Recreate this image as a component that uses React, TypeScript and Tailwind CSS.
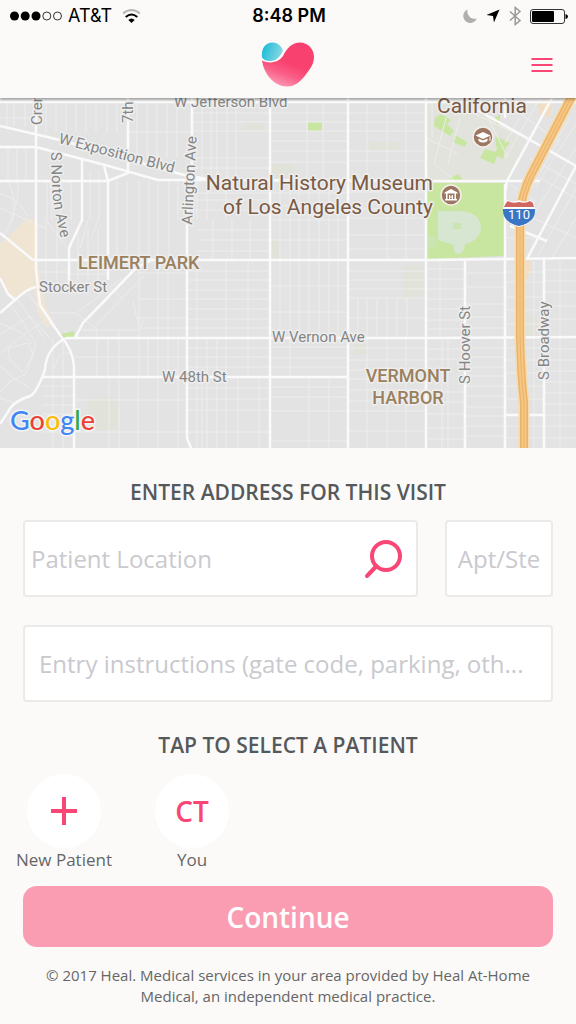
import React from 'react';

interface Block {
    x: [number, number];
    y: [number, number];
    xs: number[];
    ys: number[];
}

// Minor streets, one entry per block of the grid
const blocks: Block[] = [
    { x: [0, 36], y: [4, 28], xs: [7, 14, 25], ys: [20] },
    { x: [36, 128], y: [4, 34], xs: [46, 56, 66, 76, 86, 96, 107, 117], ys: [] },
    { x: [128, 192], y: [4, 60], xs: [137, 147, 157, 167, 177], ys: [34] },
    { x: [0, 36], y: [49, 83], xs: [8, 17, 26], ys: [] },
    { x: [36, 82], y: [83, 122], xs: [47, 61, 71], ys: [] },
    { x: [82, 108], y: [74, 122], xs: [90, 99], ys: [] },
    { x: [108, 187], y: [83, 122], xs: [117, 127, 139, 149, 158, 169, 178], ys: [] },
    { x: [108, 187], y: [122, 162], xs: [117, 127, 139, 149, 158, 169], ys: [] },
    { x: [36, 69], y: [122, 188], xs: [46, 57], ys: [174] },
    { x: [69, 108], y: [130, 162], xs: [78, 88, 98], ys: [] },
    { x: [69, 108], y: [162, 182], xs: [78, 88, 98], ys: [176] },
    { x: [138, 187], y: [162, 240], xs: [139, 158, 168], ys: [175, 201, 220, 230] },
    { x: [82, 138], y: [232, 240], xs: [97, 119], ys: [232] },
    { x: [75, 187], y: [240, 279], xs: [97, 108, 119, 139, 148, 158, 168, 178], ys: [259] },
    { x: [75, 187], y: [279, 350], xs: [109, 119, 138, 158, 178], ys: [302, 334] },
    { x: [42, 74], y: [240, 350], xs: [53, 63], ys: [288, 298, 307, 316, 334] },
    { x: [192, 270], y: [4, 82], xs: [202, 211, 217, 227, 236], ys: [15, 24, 33, 60, 70] },
    { x: [187, 270], y: [82, 122], xs: [197, 207, 226], ys: [95, 102, 112] },
    { x: [197, 270], y: [122, 162], xs: [213, 232, 250], ys: [132, 142, 153] },
    { x: [187, 270], y: [162, 240], xs: [197, 226, 248], ys: [173, 182, 192, 201, 211, 221, 230] },
    { x: [187, 270], y: [240, 279], xs: [197, 207, 217, 226, 248], ys: [250, 259, 269] },
    { x: [187, 270], y: [279, 350], xs: [197, 202, 207, 217, 226, 238, 259], ys: [290, 301, 312, 334] },
    { x: [270, 348], y: [4, 82], xs: [307, 323], ys: [15, 24, 33, 43, 53, 64] },
    { x: [270, 348], y: [82, 162], xs: [280, 290, 299, 309, 319, 329, 338], ys: [95, 108, 122, 142] },
    { x: [270, 348], y: [162, 240], xs: [280, 290, 299, 309, 319, 329, 338], ys: [188, 214] },
    { x: [270, 348], y: [240, 279], xs: [290], ys: [249, 260, 269] },
    { x: [270, 348], y: [279, 350], xs: [309, 329], ys: [289, 299, 313, 343] },
    { x: [348, 426], y: [4, 82], xs: [367, 387, 406], ys: [15, 24, 33, 53, 63] },
    { x: [348, 426], y: [82, 162], xs: [387, 406], ys: [94, 111, 120, 137, 151] },
    { x: [348, 426], y: [162, 200], xs: [], ys: [173, 182, 191, 200] },
    { x: [348, 426], y: [200, 240], xs: [358, 367, 377, 387, 397, 407], ys: [220] },
    { x: [348, 426], y: [240, 350], xs: [367, 387, 406], ys: [250, 262, 272, 281, 292, 303, 313, 333] },
    { x: [426, 465], y: [162, 240], xs: [440], ys: [171, 181, 191, 201, 211, 222, 231] },
    { x: [426, 465], y: [240, 350], xs: [442, 448], ys: [251, 261, 294, 304, 316, 330, 341] },
    { x: [465, 505], y: [162, 240], xs: [], ys: [175, 189, 206, 219, 230] },
    { x: [465, 505], y: [240, 350], xs: [], ys: [250, 259, 269, 278, 288, 298, 309, 318, 328, 338] },
    { x: [505, 544], y: [163, 350], xs: [534], ys: [174, 184, 199, 212, 226, 250, 262, 275, 288, 301, 328, 340] },
    { x: [544, 576], y: [163, 350], xs: [560], ys: [172, 183, 194, 208, 221, 251, 262, 273, 284, 295, 306, 317, 328, 340] },
];

const minorPath = blocks
    .map(({ x, y, xs, ys }) =>
        [
            ...xs.map((v) => `M${v} ${y[0]}V${y[1]}`),
            ...ys.map((v) => `M${x[0]} ${v}H${x[1]}`),
        ].join('')
    )
    .join('');

const curvedMinor = [
    'M0 110L45 130M0 96Q20 100 27 118M8 83Q18 100 12 125M17 83Q22 100 4 138',
    'M98 122L91 140M88 122L80 150M46 122L66 148M50 83L52 122',
    'M12 208L36 245L26 276M0 225L22 235L32 246M8 250L28 245L34 258L22 274L10 262Z',
    'M0 255L20 240L50 218M18 202L44 240M28 195L55 232M0 236L14 228L30 218L50 240',
    'M0 268L14 280L0 294M14 280L30 290M0 300L18 306M8 284L26 276',
    'M50 215H76L98 232M78 214L122 180M85 222L110 200M92 232L122 200L144 178',
    'M110 190L122 200L119 203M133 203L139 230M145 220L139 232M54 270Q60 250 72 256',
    'M426 40L458 56M446 20L434 66L454 82M460 20L448 66M470 14L526 40',
    'M576 26L536 88M570 20L538 70M576 50L530 122M576 90L536 162M576 120L550 163',
    'M530 60L576 86M540 80L576 100M512 110L576 140M520 20L505 45M505 5L560 44',
    'M432 4V40M510 86L536 104M540 0L505 60M560 40L520 110M508 60L480 4M505 140H540',
].join('');

const majorPath = [
    'M0 4H576',
    'M0 28L60 42L180 76L212 82',
    'M0 49H36L105 67L158 82H210L430 83H540',
    'M0 83H108',
    'M33 162H430L576 160',
    'M66 240H430L576 239',
    'M42 279H348M505 317H544',
    'M36 0V172L40 207L60 237Q73 252 74 268V350',
    'M82 62V122L69 150V188',
    'M108 83V182M128 0V75L108 83L104 68',
    'M192 0V62L187 122V340L191 350',
    'M270 0V350M348 0V350M426 0V350M505 86V350M465 162V350M544 160V350',
    'M150 163Q138 168 134 172L83 225L75 240',
    'M0 135L33 162M0 180L8 196L15 202M36 189Q28 190 15 202L0 215',
    'M66 240Q46 250 45 272Q36 296 30 298Q12 304 8 314L0 326',
    'M552 0L507 83L505 96M474 10L576 68L527 161M510 128L547 143M505 0V20',
].join('');

const freewayPath = 'M573 -4L531 77Q522 95 520 115V239Q521 278 524 305V352';

const MapLabel: React.FC<React.SVGProps<SVGTextElement>> = ({ children, ...rest }) => (
    <text
        fontSize="15"
        fill="#858585"
        stroke="#eeeeee"
        strokeWidth="3"
        strokeLinejoin="round"
        paintOrder="stroke"
        {...rest}
    >
        {children}
    </text>
);

const VisitMap: React.FC = () => (
    <svg
        viewBox="0 0 576 350"
        className="block w-full bg-[#e3e3e3] font-['Roboto',sans-serif]"
        role="img"
        aria-label="Map of Los Angeles"
    >
        {/* Land use */}
        <path d="M27 121H38V168L45 205L53 226L46 229L37 213L34 190L15 202L6 192L0 178V146Z" fill="#f0e4d2" />
        <path d="M426 4H470L526 45L506 83H426Z" fill="#e2e3dc" />
        <path d="M403 168H424V200H403ZM88 300H118V332H88ZM526 218H537V237H526ZM244 24H264V32H244ZM272 66H294V80H272ZM370 44H400V52H370ZM354 246H368V256H354ZM272 142H280V160H272Z" fill="#e1e2da" />
        <path d="M427 85H504V158L427 161Z" fill="#c9e6a1" />
        <path d="M438 113H463Q481 116 481 130Q480 142 465 146Q464 156 458 156Q453 156 454 147L438 142Z" fill="#d7e6d0" />
        <path d="M453 125H461V131H453ZM428 138H436V151H428Z" fill="#cbe5b2" />
        <path d="M308 24H322V33H308ZM61 236L74 233V240H63ZM435 20L441 16L451 22L447 26L454 33L450 38L434 28ZM455 37L467 44L465 49L453 44ZM495 38L510 45L506 49H496ZM485 51L495 54L500 45L506 47L503 61L497 58L494 66L480 60ZM450 80L458 76L464 83H450ZM495 20L500 16V24L497 28Z" fill="#c9e6a1" />
        <path d="M538 6L552 0L550 20L540 16ZM530 160L531 172L524 186V163Z" fill="#f2dfc3" />

        {/* Streets */}
        <path d={minorPath + curvedMinor} fill="none" stroke="#ededed" />
        <path d={majorPath} fill="none" stroke="#fafafa" strokeWidth="2.500" />
        <path d={freewayPath} fill="none" stroke="#f6dcae" strokeWidth="11" />
        <path d={freewayPath} fill="none" stroke="#eab368" strokeWidth="8" />
        <path d={freewayPath} fill="none" stroke="#f6c684" strokeWidth="5" />
        <path d={freewayPath} fill="none" stroke="#eab368" />

        {/* Interstate shield */}
        <path d="M505 104L508 102Q512 105 519 102Q526 105 530 102L534 104L535 111Q535 125 519 129Q503 125 503 111Z" fill="#fff" />
        <path d="M506 105L508 103Q512 106 519 104Q526 106 530 103L533 105L534 109H504Z" fill="#cf6660" />
        <path d="M503 111H535Q536 124 519 128Q502 124 503 111Z" fill="#3a76c6" />
        <text x="519" y="121" fontSize="13" fill="#fff" textAnchor="middle">110</text>

        {/* Places */}
        <g>
            <circle cx="483" cy="39" r="10" fill="#9c7862" stroke="#f5efeb" strokeWidth="1.500" />
            <path d="M475.500 37.500L483 34L490.500 37.500L483 41ZM478.500 40.500L483 42.500L487.500 40.500V43Q483 46 478.500 43ZM489.500 38.500H490.500V43H489.500Z" fill="#fff" />
            <circle cx="451" cy="97" r="10" fill="#9c7862" stroke="#f5efeb" strokeWidth="1.500" />
            <path d="M444.500 94.500L451 91L457.500 94.500V95.500H444.500ZM446 95H447.500V101H446ZM454.500 95H456V101H454.500ZM445 101H457V102.500H445ZM449 97H450.200V98.500H451.800V97H453V101H451.800V99.500H450.200V101H449Z" fill="#fff" />
        </g>

        <MapLabel x="174" y="9">W Jefferson Blvd</MapLabel>
        <MapLabel transform="translate(42 27) rotate(-90)">Cren</MapLabel>
        <MapLabel transform="translate(133 25) rotate(-90)">7th</MapLabel>
        <MapLabel transform="translate(58 45) rotate(14.500)">W Exposition Blvd</MapLabel>
        <path id="norton" d="M51 54L52 90Q53 112 66 160" fill="none" />
        <MapLabel>
            <textPath href="#norton">S Norton Ave</textPath>
        </MapLabel>
        <MapLabel transform="translate(192 127) rotate(-87)">Arlington Ave</MapLabel>
        <MapLabel x="39" y="194">Stocker St</MapLabel>
        <MapLabel x="272" y="244">W Vernon Ave</MapLabel>
        <MapLabel x="162" y="284">W 48th St</MapLabel>
        <MapLabel transform="translate(470 286) rotate(-90)">S Hoover St</MapLabel>
        <MapLabel transform="translate(549 282) rotate(-90)">S Broadway</MapLabel>

        <MapLabel x="437" y="15" fontSize="21" fill="#7a5a44">California</MapLabel>
        <MapLabel x="433" y="92" fontSize="21" fill="#7a5a44" textAnchor="end">Natural History Museum</MapLabel>
        <MapLabel x="433" y="116" fontSize="21" fill="#7a5a44" textAnchor="end">of Los Angeles County</MapLabel>

        <MapLabel x="78" y="171" fontSize="18" fontWeight="500" fill="#9a805c">LEIMERT PARK</MapLabel>
        <MapLabel x="408" y="284" fontSize="18" fontWeight="500" fill="#9a805c" textAnchor="middle">VERMONT</MapLabel>
        <MapLabel x="408" y="306" fontSize="18" fontWeight="500" fill="#9a805c" textAnchor="middle">HARBOR</MapLabel>

        <text
            x="10"
            y="332"
            fontSize="27"
            fontWeight="500"
            className="font-['Lato',sans-serif]"
            stroke="#f4f4f4"
            strokeWidth="3"
            paintOrder="stroke"
        >
            <tspan fill="#4285f4">G</tspan>
            <tspan fill="#ea4335">o</tspan>
            <tspan fill="#fbbc05">o</tspan>
            <tspan fill="#4285f4">g</tspan>
            <tspan fill="#34a853">l</tspan>
            <tspan fill="#ea4335">e</tspan>
        </text>
    </svg>
);

const HealLogo: React.FC = () => (
    <svg width="54" height="46" viewBox="0 0 54 46" aria-label="Heal" role="img">
        <defs>
            <linearGradient id="heal-pink" x1="0.600" y1="0.500" x2="0.350" y2="1.050">
                <stop offset="0" stopColor="#f9416f" />
                <stop offset="0.450" stopColor="#f95f88" />
                <stop offset="1" stopColor="#fda3bd" />
            </linearGradient>
            <linearGradient id="heal-blue" x1="0" y1="0.300" x2="1" y2="0.600">
                <stop offset="0" stopColor="#19bcd6" />
                <stop offset="1" stopColor="#90d8e4" />
            </linearGradient>
        </defs>
        <path d="M1 18.500C8 22 17 21 22 14C26 6 31 0.500 39 0.500C47 0.500 53 7 53 15C53 21 50 26 46 31C40 39 35 44.500 26 44.500C13 44.500 3 32 1 18.500Z" fill="url(#heal-pink)" />
        <path d="M1 15.500C0 7 4 0.500 11.500 0.500C16.500 0.500 20 3.500 22 8.500C19 15 15 19 9.500 19C5.500 19 2.500 18 1 15.500Z" fill="url(#heal-blue)" />
    </svg>
);

const StatusBar: React.FC = () => (
    <div className="flex h-8 items-center justify-between pr-2 pl-2.5 font-['Inter',sans-serif] text-lg text-black">
        <div className="flex flex-1 items-center gap-1.5">
            <svg width="52" height="10" viewBox="0 0 52 10">
                <circle cx="4.500" cy="5" r="4.500" />
                <circle cx="15.200" cy="5" r="4.500" />
                <circle cx="26" cy="5" r="4.500" />
                <circle cx="36.800" cy="5" r="4" fill="none" stroke="#000" strokeWidth="0.800" />
                <circle cx="47.500" cy="5" r="4" fill="none" stroke="#000" strokeWidth="0.800" />
            </svg>
            <span>AT&amp;T</span>
            <svg width="19" height="14" viewBox="0 0 19 14" className="ml-1" fill="none">
                <path d="M1 4.500Q9.500 -2.500 18 4.500" stroke="#b5b5b5" strokeWidth="1.800" />
                <path d="M3.700 8Q9.500 3 15.300 8" stroke="#000" strokeWidth="2" />
                <path d="M6.300 11Q9.500 8 12.700 11L9.500 14Z" fill="#000" />
            </svg>
        </div>
        <span className="font-semibold">8:48 PM</span>
        <div className="flex flex-1 items-center justify-end gap-[9px]">
            <svg width="14" height="14" viewBox="0 0 14 14">
                <path d="M4.500 0.500A7 7 0 1 0 13.800 9.500A7.500 7.500 0 0 1 4.500 0.500Z" fill="#b0afae" />
            </svg>
            <svg width="14" height="14" viewBox="0 0 15 15">
                <path d="M14.500 0.500L8.500 14.500L7.500 7.500L0.500 6.500Z" />
            </svg>
            <svg width="12" height="20" viewBox="0 0 12 20" fill="none" stroke="#999" strokeWidth="1.500">
                <path d="M1 5.500L11 14.500L6.200 18.500V1.500L11 5.500L1 14.500" />
            </svg>
            <svg width="38" height="15" viewBox="0 0 38 15">
                <rect x="0.500" y="0.500" width="34" height="14" rx="2.500" fill="none" stroke="#333" />
                <rect x="2" y="2" width="22" height="11" rx="1" />
                <path d="M35.500 5Q38 5.500 38 7.500Q38 9.500 35.500 10Z" />
            </svg>
        </div>
    </div>
);

const inputClass =
    'h-[77px] rounded-sm border-2 border-[#ebeae9] bg-white text-2xl text-[#55595b] placeholder:text-[#c9c9ce] placeholder:opacity-100 focus:outline-none';

const headingClass = 'text-center text-[21px] leading-7 font-semibold text-[#55595b]';

export default function App() {
    return (
        <div className="min-h-screen bg-[#fbfaf8] font-['Open_Sans',sans-serif] text-[#666]">
            <header className="relative shadow-[0_1px_3px_rgba(0,0,0,0.4)]">
                <StatusBar />
                <div className="grid h-[66px] grid-cols-3 items-center px-[21px]">
                    <span />
                    <div className="flex justify-center">
                        <HealLogo />
                    </div>
                    <button type="button" aria-label="Menu" className="justify-self-end p-0.5">
                        <svg width="22" height="16" viewBox="0 0 22 16" className="block" fill="none" stroke="#fa4674" strokeWidth="2">
                            <path d="M0.500 2H21.500M0.500 8H21.500M0.500 14H21.500" />
                        </svg>
                    </button>
                </div>
            </header>

            <VisitMap />

            <main className="pt-[30px]">
                <section className="px-[23px]">
                    <h2 className={headingClass}>ENTER ADDRESS FOR THIS VISIT</h2>
                    <div className="mt-3.5 flex gap-[27px]">
                        <div className="relative min-w-0 flex-1">
                            <input
                                type="text"
                                aria-label="Patient Location"
                                placeholder="Patient Location"
                                className={`${inputClass} w-full pr-16 pl-1.5`}
                            />
                            <button type="button" aria-label="Search" className="absolute top-[19px] right-[15px]">
                                <svg width="40" height="40" viewBox="0 0 40 40" className="block" fill="none" stroke="#fa4674" strokeWidth="4" strokeLinecap="round">
                                    <circle cx="23" cy="17" r="14" />
                                    <path d="M13.500 27L4 37" />
                                </svg>
                            </button>
                        </div>
                        <input
                            type="text"
                            aria-label="Apartment or suite"
                            placeholder="Apt/Ste"
                            className={`${inputClass} w-[108px] text-center`}
                        />
                    </div>
                    <input
                        type="text"
                        aria-label="Entry instructions"
                        placeholder="Entry instructions (gate code, parking, oth..."
                        className={`${inputClass} mt-7 w-full px-3.5`}
                    />
                </section>

                <section className="mt-[29px]">
                    <h2 className={headingClass}>TAP TO SELECT A PATIENT</h2>
                    <div className="mt-[15px] flex">
                        <button type="button" className="flex w-32 flex-col items-center">
                            <span className="flex size-[74px] items-center justify-center rounded-full bg-white">
                                <svg width="28" height="28" viewBox="0 0 28 28" stroke="#fa4674" strokeWidth="4">
                                    <path d="M1 14H27M14 0V28" />
                                </svg>
                            </span>
                            <span className="text-[17px] leading-6">New Patient</span>
                        </button>
                        <button type="button" className="flex w-32 flex-col items-center">
                            <span className="flex size-[74px] items-center justify-center rounded-full bg-white text-[28px] font-semibold text-[#fa4674]">
                                CT
                            </span>
                            <span className="text-[17px] leading-6">You</span>
                        </button>
                    </div>
                </section>

                <footer className="px-[23px] pt-3.5 pb-4">
                    <button type="button" className="h-[61px] w-full rounded-[14px] bg-[#fa9db3] text-[28px] font-semibold text-white">
                        Continue
                    </button>
                    <p className="mt-[18px] px-2 text-center text-[15px] leading-[21px]">
                        © 2017 Heal. Medical services in your area provided by Heal At-Home Medical, an independent medical practice.
                    </p>
                </footer>
            </main>
        </div>
    );
}
